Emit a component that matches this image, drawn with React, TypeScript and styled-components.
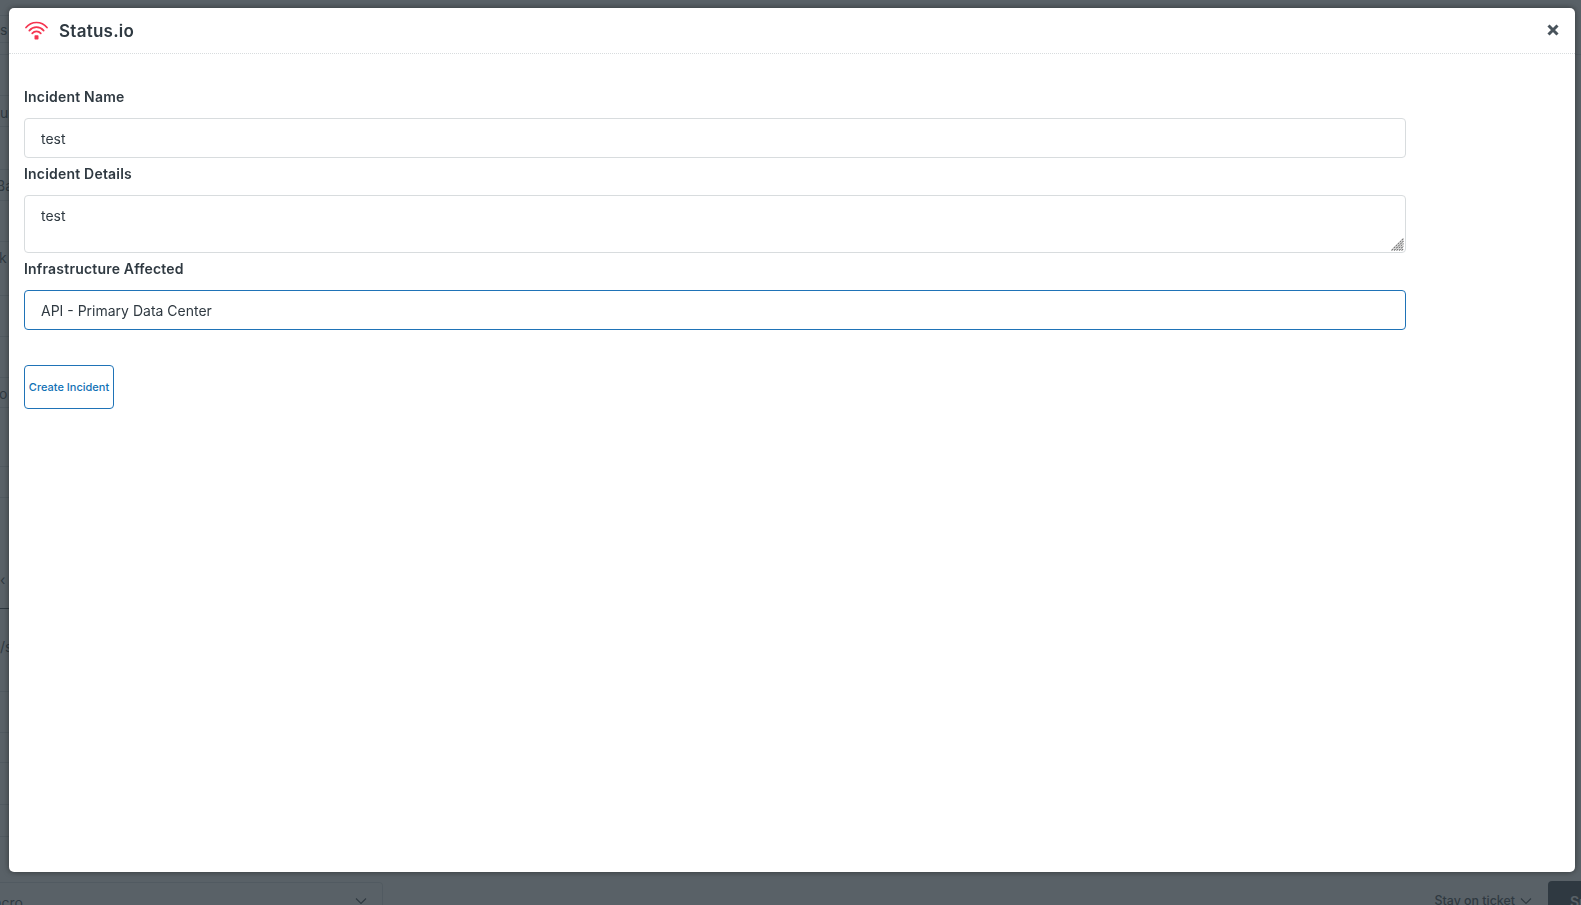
import styled, { createGlobalStyle } from "styled-components"

const GlobalStyle = createGlobalStyle`
html, body {
  margin: 0;
  height: 100%;
  overflow: hidden;
  background: white;
  font-family: Inter, "Noto Sans", sans-serif;
  color: #2f3941;
}
`

const Page = styled.div`
height: 905px;
display: flex;
flex-direction: column;
overflow: hidden;
`
const Rails = styled.div`
height: 881px;
flex-shrink: 0;
display: flex;
justify-content: space-between;
`
const Rail = styled.div`
width: 9px;
overflow: hidden;
`
const RailRow = styled.div<{ $height: number; $strong?: boolean; $shift?: number }>`
height: ${(p) => p.$height}px;
box-sizing: border-box;
border-bottom: 1px solid ${(p) => (p.$strong ? "#2f3941" : "#d8dcde")};
padding-top: ${(p) => Math.max(p.$shift ?? 0, 0)}px;
padding-bottom: ${(p) => Math.max(-(p.$shift ?? 0), 0)}px;
display: flex;
align-items: center;
font-size: 14px;
white-space: nowrap;
`
const RailText = styled.span<{ $indent: number }>`
margin-left: ${(p) => p.$indent}px;
`
const RightRail = styled(Rail)`
width: 6px;
`
const Footer = styled.div`
flex: 1;
min-height: 0;
display: flex;
align-items: flex-start;
`
const MacroSelect = styled.div`
width: 383px;
height: 40px;
flex-shrink: 0;
margin-top: 1px;
box-sizing: border-box;
border: 1px solid #d8dcde;
border-left: none;
border-radius: 0 4px 4px 0;
display: flex;
align-items: flex-start;
justify-content: space-between;
padding: 11px 15px 0 0;
font-size: 14px;
`
const MacroText = styled.span`
margin-left: -19px;
`
const MacroChevron = styled.span`
display: flex;
margin-top: 3px;
`
const FooterRight = styled.div`
margin-left: auto;
display: flex;
align-items: flex-start;
`
const StayLabel = styled.div`
display: flex;
align-items: center;
gap: 5px;
font-size: 12.4px;
font-weight: 500;
margin-top: 12px;
margin-right: 16px;
`
const SubmitButton = styled.div`
width: 33px;
height: 40px;
box-sizing: border-box;
padding: 12px 0 0 22px;
background: #2f3941;
color: white;
border-radius: 4px 0 0 0;
font-size: 14px;
font-weight: 600;
overflow: hidden;
`

const Backdrop = styled.div`
position: fixed;
inset: 0;
background: rgba(47, 57, 65, 0.8);
`
const Modal = styled.div`
position: fixed;
left: 9px;
top: 8px;
width: 1566px;
height: 864px;
background: white;
border-radius: 5px;
box-shadow: 0 0 6px rgba(0, 0, 0, 0.45);
display: flex;
flex-direction: column;
`
const Header = styled.header`
height: 46px;
box-sizing: border-box;
border-bottom: 1px dotted #d8dcde;
display: flex;
align-items: center;
padding: 0 12px 0 16px;
`
const Title = styled.h1`
margin: 0 0 0 11px;
font-size: 17px;
font-weight: 600;
line-height: 22px;
letter-spacing: 0.25px;
flex: 1;
`
const CloseButton = styled.button`
width: 20px;
height: 20px;
margin-top: -2px;
padding: 0;
border: none;
background: none;
display: flex;
align-items: center;
justify-content: center;
`
const Form = styled.form`
width: 1382px;
padding: 33px 0 0 15px;
display: flex;
flex-direction: column;
`
const Label = styled.label`
display: block;
font-size: 14px;
font-weight: 600;
line-height: 20px;
letter-spacing: 0.2px;
margin-bottom: 11px;
`
const Field = styled.input<{ $focused?: boolean }>`
display: block;
width: 100%;
height: 40px;
box-sizing: border-box;
padding: 0 16px;
margin-bottom: 6px;
border: 1px solid ${(p) => (p.$focused ? "#1f73b7" : "#d8dcde")};
border-radius: 4px;
font: 400 14px Inter, sans-serif;
color: #2f3941;
outline: none;
`
const TextAreaWrap = styled.div`
position: relative;
margin-bottom: 6px;
`
const TextArea = styled.textarea`
display: block;
width: 100%;
height: 58px;
box-sizing: border-box;
padding: 10px 16px;
border: 1px solid #d8dcde;
border-radius: 4px;
font: 400 14px/20px Inter, sans-serif;
color: #2f3941;
outline: none;
resize: none;
`
const ResizeGrip = styled.svg`
position: absolute;
right: 2px;
bottom: 2px;
`
const SubmitRow = styled.div`
margin-top: 29px;
`
const CreateButton = styled.button`
width: 90px;
height: 44px;
padding: 0;
background: white;
border: 1px solid #1f73b7;
border-radius: 4px;
color: #1171b5;
font: 500 11px Inter, sans-serif;
`

const leftRows = [
  { height: 16 },
  { height: 27, text: "s", indent: 0 },
  { height: 12 },
  { height: 41 },
  { height: 31, text: "up", indent: 0, shift: 2 },
  { height: 43 },
  { height: 31, text: "Ba", indent: -4 },
  { height: 41 },
  { height: 54, text: "k", indent: -1, shift: -22 },
  { height: 41 },
  { height: 41 },
  { height: 30, text: "o", indent: -1, shift: 2 },
  { height: 59 },
  { height: 31 },
  { height: 111, text: "‹", indent: 0, strong: true, shift: 52 },
  { height: 83, text: "/s", indent: 0, shift: -8 },
  { height: 41 },
  { height: 30 },
  { height: 42 },
  { height: 32 },
]

function Chevron() {
  return (
    <svg width="12" height="8" viewBox="0 0 12 8" fill="none">
      <path d="M1 1.5 6 6.5 11 1.5" stroke="#2f3941" strokeWidth="1.2" />
    </svg>
  )
}

function WifiIcon() {
  return (
    <svg width="23" height="19" viewBox="0 0 23 19" fill="none" stroke="#f5344f" strokeWidth="1.7" strokeLinecap="round">
      <path d="M1 6.5C6.5 -0.2 16.5 -0.2 22 6.5" />
      <path d="M4.3 9.6C8.3 5 14.7 5 18.7 9.6" />
      <path d="M7.2 12.3C9.6 9.7 13.4 9.7 15.8 12.3" />
      <rect x="9.5" y="14.2" width="4" height="4.2" rx="0.7" fill="#f5344f" stroke="none" />
    </svg>
  )
}

export default function App() {
  return (
    <>
      <GlobalStyle />
      <Page>
        <Rails>
          <Rail>
            {leftRows.map((row, index) => (
              <RailRow key={index} $height={row.height} $strong={row.strong} $shift={row.shift}>
                {row.text && <RailText $indent={row.indent ?? 0}>{row.text}</RailText>}
              </RailRow>
            ))}
          </Rail>
          <RightRail>
            <RailRow $height={55} />
          </RightRail>
        </Rails>
        <Footer>
          <MacroSelect>
            <MacroText>Macro</MacroText>
            <MacroChevron>
              <Chevron />
            </MacroChevron>
          </MacroSelect>
          <FooterRight>
            <StayLabel>
              Stay on ticket
              <Chevron />
            </StayLabel>
            <SubmitButton>Submit</SubmitButton>
          </FooterRight>
        </Footer>
      </Page>
      <Backdrop />
      <Modal>
        <Header>
          <WifiIcon />
          <Title>Status.io</Title>
          <CloseButton aria-label="Close">
            <svg width="12" height="12" viewBox="0 0 12 12">
              <path d="M1.5 1.5 10.5 10.5M10.5 1.5 1.5 10.5" stroke="#49545c" strokeWidth="3" />
            </svg>
          </CloseButton>
        </Header>
        <Form>
          <Label>Incident Name</Label>
          <Field readOnly value="test" />
          <Label>Incident Details</Label>
          <TextAreaWrap>
            <TextArea readOnly value="test" />
            <ResizeGrip width="13" height="13" viewBox="0 0 13 13" stroke="#777" strokeWidth="1.1" strokeDasharray="2.4 0.5">
              <path d="M0.5 12.5 12.5 0.5M3 12.5 12.5 3M5.5 12.5 12.5 5.5M8 12.5 12.5 8M10.5 12.5 12.5 10.5" />
            </ResizeGrip>
          </TextAreaWrap>
          <Label>Infrastructure Affected</Label>
          <Field readOnly $focused value="API - Primary Data Center" />
          <SubmitRow>
            <CreateButton type="button">Create Incident</CreateButton>
          </SubmitRow>
        </Form>
      </Modal>
    </>
  )
}
